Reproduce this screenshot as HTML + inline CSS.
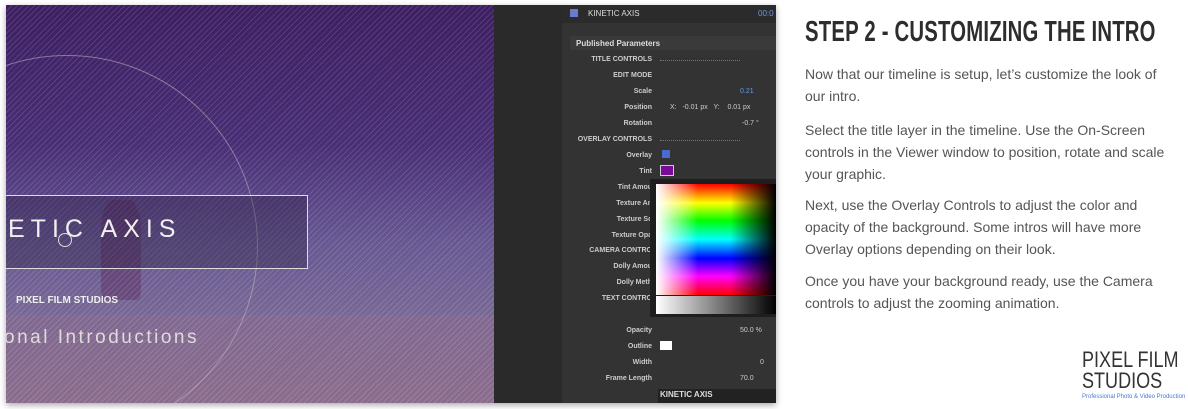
<!DOCTYPE html>
<html><head><meta charset="utf-8"><style>
html,body{margin:0;width:1188px;height:409px;overflow:hidden}
body{background:#fff;position:relative;font-family:"Liberation Sans",sans-serif}
.shot{position:absolute;left:6px;top:5px;width:770px;height:398px;box-shadow:0 2px 6px rgba(0,0,0,.35);overflow:hidden;background:#2a2a2a}
.vid{position:absolute;left:0;top:0;width:488px;height:398px;background:linear-gradient(#3e1f63 0%,#4a2f78 35%,#6a5a96 60%,#7a6a98 78%,#8a7092 100%);overflow:hidden}
.stripes{position:absolute;inset:0;background:repeating-linear-gradient(135deg,rgba(255,255,255,.12) 0 1px,rgba(0,0,0,.08) 1px 2px,transparent 2px 4px)}
.panel{position:absolute;left:556px;top:0;width:214px;height:398px;background:#333}
.lbl{position:absolute;font-size:7px;color:#ccc;font-weight:bold;text-align:right;width:90px}
h2{position:absolute;left:805px;top:16px;margin:0;font-size:29px;font-weight:bold;color:#2d2d2d;transform:scaleX(.70);transform-origin:left;white-space:nowrap;letter-spacing:.3px}
p{position:absolute;left:805px;margin:0;width:366px;font-size:14px;line-height:22px;color:#555}
</style></head><body>
<div class="shot">
 <div class="vid">
  <div style="position:absolute;left:0;top:310px;width:488px;height:88px;background:rgba(150,110,140,.35)"></div>
  <div style="position:absolute;left:95px;top:195px;width:40px;height:100px;background:rgba(90,30,80,.35);border-radius:30% 30% 10% 10%"></div>
  <div class="stripes"></div>
  <div style="position:absolute;left:-130px;top:50px;width:380px;height:380px;border:1px solid rgba(200,200,200,.5);border-radius:50%"></div>
  <div style="position:absolute;left:-2px;top:190px;width:302px;height:72px;border:1px solid #ddd;background:rgba(40,30,60,.35)"></div>
  <div style="position:absolute;left:2px;top:210px;font-size:25px;color:#f0f0f0;letter-spacing:6px">ETIC AXIS</div>
  <div style="position:absolute;left:52px;top:228px;width:12px;height:12px;border:1px solid #ddd;border-radius:50%"></div>
  <div style="position:absolute;left:10px;top:290px;font-size:10px;font-weight:bold;color:#eee">PIXEL FILM STUDIOS</div>
  <div style="position:absolute;left:-2px;top:322px;font-size:19px;color:#ddd;letter-spacing:2.5px">onal Introductions</div>
 </div>
 <div class="panel">
  <div style="position:absolute;left:0;top:0;width:214px;height:18px;background:#2b2b2b"></div>
  <div style="position:absolute;left:8px;top:4px;width:8px;height:8px;background:#6a7ad0"></div>
  <div style="position:absolute;left:26px;top:4px;font-size:8px;color:#ddd">KINETIC AXIS</div>
  <div style="position:absolute;left:196px;top:4px;font-size:8px;color:#6b9ae0">00:0</div>
  <div style="position:absolute;left:8px;top:31px;width:206px;height:14px;background:#3a3a3a"></div>
  <div style="position:absolute;left:14px;top:34px;font-size:8px;color:#ddd;font-weight:bold">Published Parameters</div>
  <div class="lbl" style="left:0;top:51px">TITLE CONTROLS</div>
  <div class="lbl" style="left:0;top:67px">EDIT MODE</div>
  <div class="lbl" style="left:0;top:83px">Scale</div>
  <div class="lbl" style="left:0;top:99px">Position</div>
  <div class="lbl" style="left:0;top:115px">Rotation</div>
  <div class="lbl" style="left:0;top:131px">OVERLAY CONTROLS</div>
  <div class="lbl" style="left:0;top:147px">Overlay</div>
  <div class="lbl" style="left:0;top:163px">Tint</div>
  <div class="lbl" style="left:0;top:179px">Tint Amou</div>
  <div class="lbl" style="left:0;top:195px">Texture An</div>
  <div class="lbl" style="left:0;top:211px">Texture Sc</div>
  <div class="lbl" style="left:0;top:227px">Texture Opa</div>
  <div class="lbl" style="left:0;top:242px">CAMERA CONTRO</div>
  <div class="lbl" style="left:0;top:258px">Dolly Amou</div>
  <div class="lbl" style="left:0;top:274px">Dolly Meth</div>
  <div class="lbl" style="left:0;top:290px">TEXT CONTRO</div>
  <div class="lbl" style="left:0;top:322px">Opacity</div>
  <div class="lbl" style="left:0;top:338px">Outline</div>
  <div class="lbl" style="left:0;top:354px">Width</div>
  <div class="lbl" style="left:0;top:370px">Frame Length</div>
  <div style="position:absolute;left:98px;top:55px;width:80px;border-top:1px dotted #777"></div>
  <div style="position:absolute;left:98px;top:135px;width:80px;border-top:1px dotted #777"></div>
  <div style="position:absolute;left:178px;top:83px;font-size:7px;color:#6b9ae0">0.21</div>
  <div style="position:absolute;left:108px;top:99px;font-size:7px;color:#ccc">X: &nbsp; -0.01 px &nbsp; Y: &nbsp;&nbsp; 0.01 px</div>
  <div style="position:absolute;left:180px;top:115px;font-size:7px;color:#ccc">-0.7 °</div>
  <div style="position:absolute;left:100px;top:145px;width:8px;height:8px;background:#4a6ad0"></div>
  <div style="position:absolute;left:98px;top:160px;width:12px;height:9px;background:#7a0a9a;border:1px solid #ccc"></div>
  <div style="position:absolute;left:98px;top:336px;width:12px;height:9px;background:#fff"></div>
  <div style="position:absolute;left:178px;top:322px;font-size:7px;color:#ccc">50.0 %</div>
  <div style="position:absolute;left:198px;top:354px;font-size:7px;color:#ccc">0</div>
  <div style="position:absolute;left:178px;top:370px;font-size:7px;color:#ccc">70.0</div>
  <div style="position:absolute;left:96px;top:384px;width:118px;height:14px;background:#222"></div>
  <div style="position:absolute;left:98px;top:385px;font-size:8px;color:#ddd;font-weight:bold">KINETIC AXIS</div>
  <div style="position:absolute;left:88px;top:174px;width:126px;height:138px;background:#1e1e1e"></div>
  <div style="position:absolute;left:94px;top:179px;width:120px;height:111px;background:linear-gradient(to right,#fff,rgba(255,255,255,0) 35%,rgba(0,0,0,0) 62%,#000),linear-gradient(to bottom,#f00,#ff0 17%,#0f0 33%,#0ff 50%,#00f 67%,#f0f 83%,#f00)"></div>
  <div style="position:absolute;left:94px;top:291px;width:120px;height:18px;background:linear-gradient(to right,#fff,#000)"></div>
 </div>
</div>
<h2>STEP 2 - CUSTOMIZING THE INTRO</h2>
<p style="top:63px">Now that our timeline is setup, let’s customize the look of our intro.</p>
<p style="top:119px">Select the title layer in the timeline. Use the On-Screen controls in the Viewer window to position, rotate and scale your graphic.</p>
<p style="top:194px">Next, use the Overlay Controls to adjust the color and opacity of the background. Some intros will have more Overlay options depending on their look.</p>
<p style="top:270px">Once you have your background ready, use the Camera controls to adjust the zooming animation.</p>
<div style="position:absolute;left:1082px;top:349px;font-size:22px;line-height:21px;color:#333;transform:scaleX(.82);transform-origin:left;white-space:nowrap">PIXEL FILM<br>STUDIOS</div>
<div style="position:absolute;left:1082px;top:393px;font-size:6px;line-height:8px;color:#4a7ad0;white-space:nowrap">Professional Photo &amp; Video Production</div>
</body></html>
